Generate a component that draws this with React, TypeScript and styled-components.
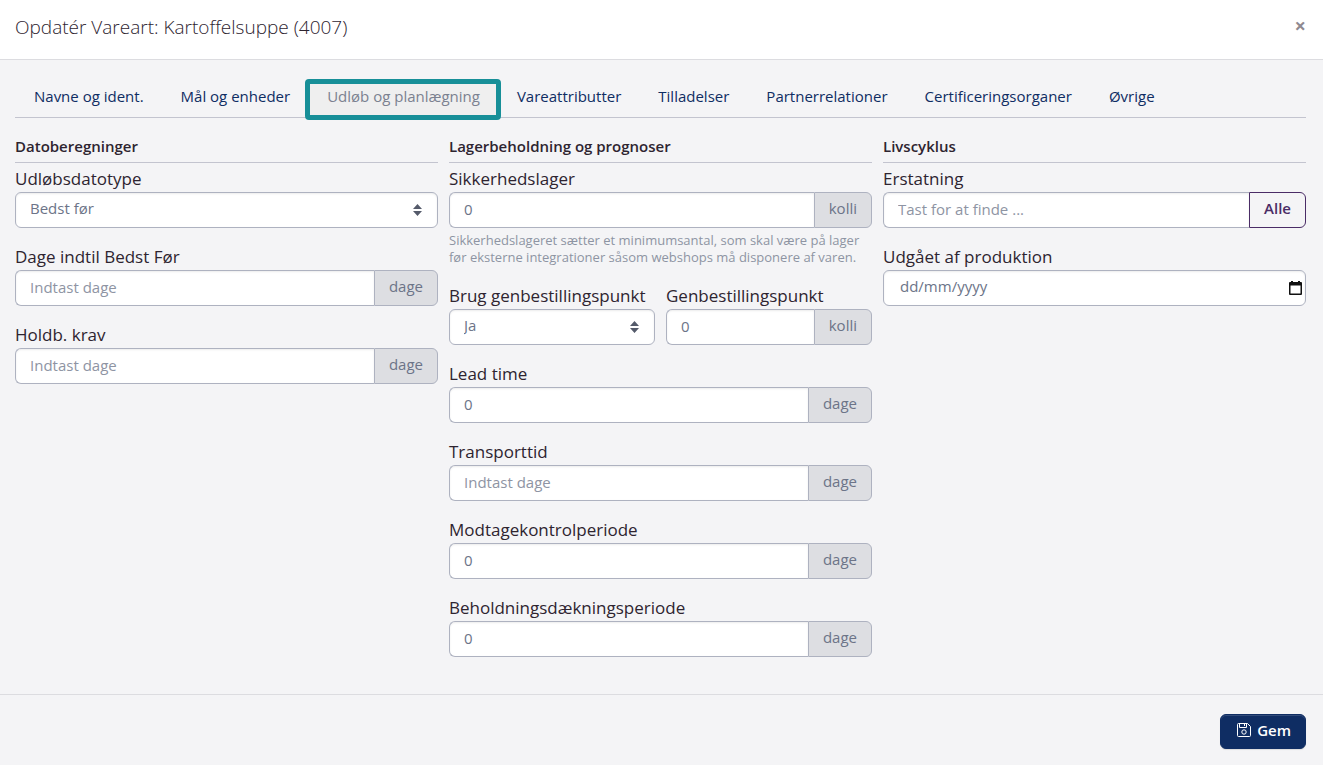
import { useState } from "react";
import styled, { createGlobalStyle } from "styled-components";

const tabs = [
  "Navne og ident.",
  "Mål og enheder",
  "Udløb og planlægning",
  "Vareattributter",
  "Tilladelser",
  "Partnerrelationer",
  "Certificeringsorganer",
  "Øvrige",
];

type UnitFieldProps = {
  id: string;
  label: string;
  unit: string;
  value?: string;
  placeholder?: string;
};

const UnitField = ({ id, label, unit, value, placeholder }: UnitFieldProps) => (
  <Field>
    <Label htmlFor={id}>{label}</Label>
    <InputGroup>
      <Input id={id} type="text" defaultValue={value} placeholder={placeholder} />
      <Unit>{unit}</Unit>
    </InputGroup>
  </Field>
);

type SelectFieldProps = {
  id: string;
  label: string;
  options: string[];
};

const SelectField = ({ id, label, options }: SelectFieldProps) => (
  <Field>
    <Label htmlFor={id}>{label}</Label>
    <SelectBox>
      <Select id={id}>
        {options.map((option) => (
          <option key={option}>{option}</option>
        ))}
      </Select>
      <SelectArrows viewBox="0 0 9 12" aria-hidden="true">
        <path d="M4.5 0L9 5H0zM4.5 12L0 7h9z" fill="currentColor" />
      </SelectArrows>
    </SelectBox>
  </Field>
);

export default function App() {
  const [activeTab, setActiveTab] = useState("Udløb og planlægning");

  return (
    <>
      <GlobalStyle />
      <Modal>
        <Header>
          <Title>Opdatér Vareart: Kartoffelsuppe (4007)</Title>
          <CloseButton type="button" aria-label="Luk">
            ×
          </CloseButton>
        </Header>
        <Body>
          <Tabs role="tablist">
            {tabs.map((tab) => (
              <Tab
                key={tab}
                type="button"
                role="tab"
                aria-selected={activeTab === tab}
                $active={activeTab === tab}
                onClick={() => setActiveTab(tab)}
              >
                {tab}
              </Tab>
            ))}
          </Tabs>
          <Columns>
            <section>
              <SectionTitle>Datoberegninger</SectionTitle>
              <SelectField
                id="expiryType"
                label="Udløbsdatotype"
                options={["Bedst før", "Sidste anvendelse"]}
              />
              <UnitField
                id="daysToBest"
                label="Dage indtil Bedst Før"
                unit="dage"
                placeholder="Indtast dage"
              />
              <UnitField
                id="shelfLife"
                label="Holdb. krav"
                unit="dage"
                placeholder="Indtast dage"
              />
            </section>
            <section>
              <SectionTitle>Lagerbeholdning og prognoser</SectionTitle>
              <Field>
                <Label htmlFor="safetyStock">Sikkerhedslager</Label>
                <InputGroup>
                  <Input id="safetyStock" type="text" defaultValue="0" />
                  <Unit>kolli</Unit>
                </InputGroup>
                <Help>
                  Sikkerhedslageret sætter et minimumsantal, som skal være på
                  lager før eksterne integrationer såsom webshops må disponere
                  af varen.
                </Help>
              </Field>
              <Pair>
                <SelectField
                  id="useReorder"
                  label="Brug genbestillingspunkt"
                  options={["Ja", "Nej"]}
                />
                <UnitField
                  id="reorderPoint"
                  label="Genbestillingspunkt"
                  unit="kolli"
                  value="0"
                />
              </Pair>
              <UnitField id="leadTime" label="Lead time" unit="dage" value="0" />
              <UnitField
                id="transport"
                label="Transporttid"
                unit="dage"
                placeholder="Indtast dage"
              />
              <UnitField
                id="inspection"
                label="Modtagekontrolperiode"
                unit="dage"
                value="0"
              />
              <UnitField
                id="coverage"
                label="Beholdningsdækningsperiode"
                unit="dage"
                value="0"
              />
            </section>
            <section>
              <SectionTitle>Livscyklus</SectionTitle>
              <Field>
                <Label htmlFor="replacement">Erstatning</Label>
                <InputGroup>
                  <Input
                    id="replacement"
                    type="text"
                    placeholder="Tast for at finde ..."
                  />
                  <AllButton type="button">Alle</AllButton>
                </InputGroup>
              </Field>
              <Field>
                <Label htmlFor="discontinued">Udgået af produktion</Label>
                <DateBox>
                  <DateInput
                    id="discontinued"
                    type="text"
                    inputMode="numeric"
                    placeholder="dd/mm/yyyy"
                  />
                  <CalendarButton type="button" aria-label="Vælg dato">
                    <svg width="13" height="14" viewBox="0 0 13 14">
                      <path
                        d="M2 0h2v1h5V0h2v1h1a1 1 0 0 1 1 1v11a1 1 0 0 1-1 1H1a1 1 0 0 1-1-1V2a1 1 0 0 1 1-1h1zM1.500 4.500v8h10v-8z"
                        fill="currentColor"
                        fillRule="evenodd"
                      />
                    </svg>
                  </CalendarButton>
                </DateBox>
              </Field>
            </section>
          </Columns>
        </Body>
        <Footer>
          <SaveButton type="submit">
            <SaveIcon viewBox="0 0 14 14" aria-hidden="true">
              <path d="M1.5.5h9l3 3v9a1 1 0 0 1-1 1h-11a1 1 0 0 1-1-1v-11a1 1 0 0 1 1-1z" />
              <path d="M2.5.5v4h7v-4M7.500 1v2" />
              <circle cx="7" cy="9" r="2.2" />
            </SaveIcon>
            Gem
          </SaveButton>
        </Footer>
      </Modal>
    </>
  );
}

const GlobalStyle = createGlobalStyle`
  * {
    box-sizing: border-box;
  }
  body {
    margin: 0;
    background: #f4f4f6;
    color: #2e2430;
    font-family: "Open Sans", sans-serif;
    font-size: 15px;
  }
  button, input, select {
    font-family: inherit;
    font-size: inherit;
    margin: 0;
  }
`;

const Modal = styled.div`
  display: flex;
  flex-direction: column;
  min-height: 100vh;
`;

const Header = styled.header`
  display: flex;
  align-items: flex-start;
  justify-content: space-between;
  padding: 15px 17px 20px 15px;
  background: #ffffff;
  border-bottom: 1px solid #dcdce0;
`;

const Title = styled.h1`
  margin: 0;
  font-size: 19px;
  font-weight: 300;
  line-height: 24px;
`;

const CloseButton = styled.button`
  padding: 0;
  border: 0;
  background: none;
  color: #8f8a91;
  font-size: 20px;
  font-weight: 700;
  line-height: 22px;
  cursor: pointer;
`;

const Body = styled.main`
  flex: 1;
  padding: 22px 17px 17px 15px;
`;

const Tabs = styled.div`
  display: flex;
  flex-wrap: wrap;
  border-bottom: 1px solid #c3c4cf;
`;

const Tab = styled.button<{ $active: boolean }>`
  height: 35px;
  padding: 0 18px 8px 19px;
  border: 0;
  border-radius: 1px;
  outline: ${({ $active }) => ($active ? "5px solid #178f98" : "0")};
  outline-offset: -2px;
  background: ${({ $active }) => ($active ? "#efefef" : "transparent")};
  color: ${({ $active }) => ($active ? "#7b8190" : "#0f2d63")};
  cursor: pointer;
`;

const Columns = styled.div`
  display: grid;
  grid-template-columns: repeat(3, minmax(0, 1fr));
  column-gap: 11px;
  padding-top: 18px;
  @media screen and (max-width: 800px) {
    grid-template-columns: 1fr;
  }
`;

const SectionTitle = styled.h2`
  margin: 0 0 5px;
  padding-bottom: 5px;
  border-bottom: 1px solid #c3c4cf;
  font-size: 15px;
  font-weight: 600;
  line-height: 21px;
`;

const Field = styled.div`
  margin-bottom: 18px;
`;

const Pair = styled.div`
  display: grid;
  grid-template-columns: repeat(2, minmax(0, 1fr));
  column-gap: 11px;
`;

const Label = styled.label`
  display: block;
  margin-bottom: 2px;
  font-size: 17px;
  line-height: 22px;
  white-space: nowrap;
`;

const InputGroup = styled.div`
  display: flex;
  height: 36px;
`;

const Input = styled.input`
  flex: 1;
  min-width: 0;
  padding: 0 14px 3px;
  border: 1px solid #aeb2c0;
  border-radius: 6px;
  background: #ffffff;
  box-shadow: inset 0 1px 2px rgba(0, 0, 0, 0.08);
  color: #6c7488;
  &:not(:last-child) {
    border-right: 0;
    border-radius: 6px 0 0 6px;
  }
  &::placeholder {
    color: #8e94a3;
    opacity: 1;
  }
`;

const DateBox = styled.div`
  display: flex;
  height: 36px;
  border: 1px solid #aeb2c0;
  border-radius: 6px;
  background: #ffffff;
  box-shadow: inset 0 1px 2px rgba(0, 0, 0, 0.08);
`;

const DateInput = styled.input`
  flex: 1;
  min-width: 0;
  padding: 0 16px 4px;
  border: 0;
  background: transparent;
  color: #6c7488;
  &::placeholder {
    color: #6c7488;
    opacity: 1;
  }
`;

const CalendarButton = styled.button`
  display: flex;
  align-items: center;
  padding: 0 3px;
  border: 0;
  background: none;
  color: #111111;
  cursor: pointer;
`;

const Unit = styled.span`
  display: flex;
  align-items: center;
  padding: 0 14px 4px;
  border: 1px solid #aeb2c0;
  border-radius: 0 6px 6px 0;
  background: #dddee2;
  color: #6c7488;
`;

const AllButton = styled.button`
  padding: 0 14px 4px;
  border: 1px solid #4a2c66;
  border-radius: 0 6px 6px 0;
  background: transparent;
  color: #4a2c66;
  font-weight: 600;
  cursor: pointer;
`;

const Help = styled.small`
  display: block;
  padding: 4px 0 1px;
  color: #8e94a3;
  font-size: 13px;
  line-height: 17px;
`;

const SelectBox = styled.div`
  display: grid;
  align-items: center;
`;

const Select = styled.select`
  grid-area: 1 / 1;
  width: 100%;
  height: 36px;
  padding: 0 32px 4px 14px;
  appearance: none;
  border: 1px solid #aeb2c0;
  border-radius: 6px;
  background: #ffffff;
  box-shadow: inset 0 1px 2px rgba(0, 0, 0, 0.08);
  color: #6c7488;
`;

const SelectArrows = styled.svg`
  grid-area: 1 / 1;
  justify-self: end;
  width: 9px;
  height: 12px;
  margin-right: 16px;
  color: #555b6b;
  pointer-events: none;
`;

const Footer = styled.footer`
  display: flex;
  justify-content: flex-end;
  padding: 19px 17px 16px 15px;
  border-top: 1px solid #dcdce0;
`;

const SaveButton = styled.button`
  display: flex;
  align-items: center;
  gap: 6px;
  height: 35px;
  padding: 0 14px 3px 16px;
  border: 1px solid #0f2d63;
  border-radius: 6px;
  background: #0f2d63;
  box-shadow: inset 0 1px 0 rgba(255, 255, 255, 0.15), 0 1px 1px rgba(0, 0, 0, 0.1);
  color: #ffffff;
  font-weight: 600;
  cursor: pointer;
`;

const SaveIcon = styled.svg`
  width: 14px;
  height: 14px;
  fill: none;
  stroke: currentColor;
`;
